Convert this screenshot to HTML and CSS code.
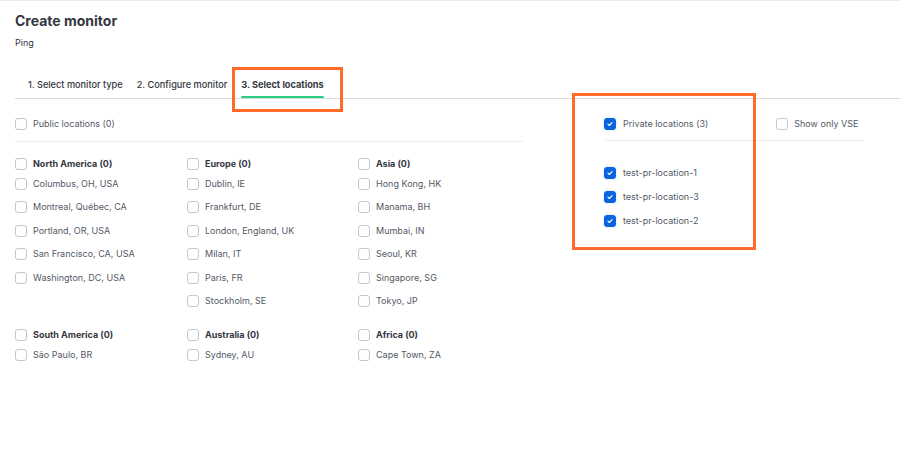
FILE: index.html
```html
<!DOCTYPE html>
<html>
<head>
<meta charset="utf-8">
<link rel="stylesheet" href="styles.css">
</head>
<body>
<div class="page">
  <h1 class="title">Create monitor</h1>
  <div class="subtitle">Ping</div>
  <div class="tabs">
    <div class="tab">1. Select monitor type</div>
    <div class="tab">2. Configure monitor</div>
    <div class="tab active">3. Select locations</div>
  </div>
  <div class="content">
    <div class="public">
      <label class="row top"><span class="cb"></span><span>Public locations (0)</span></label>
      <div class="divider"></div>
      <div class="grid">
        <div class="group">
          <label class="row head"><span class="cb"></span><span>North America (0)</span></label>
          <label class="row"><span class="cb"></span><span>Columbus, OH, USA</span></label>
          <label class="row"><span class="cb"></span><span>Montreal, Québec, CA</span></label>
          <label class="row"><span class="cb"></span><span>Portland, OR, USA</span></label>
          <label class="row"><span class="cb"></span><span>San Francisco, CA, USA</span></label>
          <label class="row"><span class="cb"></span><span>Washington, DC, USA</span></label>
        </div>
        <div class="group">
          <label class="row head"><span class="cb"></span><span>Europe (0)</span></label>
          <label class="row"><span class="cb"></span><span>Dublin, IE</span></label>
          <label class="row"><span class="cb"></span><span>Frankfurt, DE</span></label>
          <label class="row"><span class="cb"></span><span>London, England, UK</span></label>
          <label class="row"><span class="cb"></span><span>Milan, IT</span></label>
          <label class="row"><span class="cb"></span><span>Paris, FR</span></label>
          <label class="row"><span class="cb"></span><span>Stockholm, SE</span></label>
        </div>
        <div class="group">
          <label class="row head"><span class="cb"></span><span>Asia (0)</span></label>
          <label class="row"><span class="cb"></span><span>Hong Kong, HK</span></label>
          <label class="row"><span class="cb"></span><span>Manama, BH</span></label>
          <label class="row"><span class="cb"></span><span>Mumbai, IN</span></label>
          <label class="row"><span class="cb"></span><span>Seoul, KR</span></label>
          <label class="row"><span class="cb"></span><span>Singapore, SG</span></label>
          <label class="row"><span class="cb"></span><span>Tokyo, JP</span></label>
        </div>
        <div class="group">
          <label class="row head"><span class="cb"></span><span>South America (0)</span></label>
          <label class="row"><span class="cb"></span><span>São Paulo, BR</span></label>
        </div>
        <div class="group">
          <label class="row head"><span class="cb"></span><span>Australia (0)</span></label>
          <label class="row"><span class="cb"></span><span>Sydney, AU</span></label>
        </div>
        <div class="group">
          <label class="row head"><span class="cb"></span><span>Africa (0)</span></label>
          <label class="row"><span class="cb"></span><span>Cape Town, ZA</span></label>
        </div>
      </div>
    </div>
    <div class="private">
      <div class="private-top">
        <label class="row top wide"><span class="cb on"><svg viewBox="0 0 12 12"><path d="M3.5 6.2 L5.2 7.8 L8.5 4.4" /></svg></span><span>Private locations (3)</span></label>
        <label class="row top"><span class="cb"></span><span>Show only VSE</span></label>
      </div>
      <div class="divider"></div>
      <div class="private-list">
        <label class="row wide"><span class="cb on"><svg viewBox="0 0 12 12"><path d="M3.5 6.2 L5.2 7.8 L8.5 4.4" /></svg></span><span>test-pr-location-1</span></label>
        <label class="row wide"><span class="cb on"><svg viewBox="0 0 12 12"><path d="M3.5 6.2 L5.2 7.8 L8.5 4.4" /></svg></span><span>test-pr-location-3</span></label>
        <label class="row wide"><span class="cb on"><svg viewBox="0 0 12 12"><path d="M3.5 6.2 L5.2 7.8 L8.5 4.4" /></svg></span><span>test-pr-location-2</span></label>
      </div>
    </div>
  </div>
  <div class="hl hl-tab"></div>
  <div class="hl hl-private"></div>
</div>
</body>
</html>
```

FILE: styles.css
```css
* { box-sizing: border-box; }
html, body { margin: 0; padding: 0; background: #fff; }
body {
  font-family: Inter, "Noto Sans", sans-serif;
  color: #535966;
  border-top: 1px solid #ececec;
  width: 900px;
  height: 449px;
  overflow: hidden;
}
.page {
  position: relative;
  padding: 11px 0 0 15px;
}
.title {
  margin: 0;
  font-size: 14px;
  line-height: 18px;
  font-weight: 700;
  color: #343741;
}
.subtitle {
  margin-top: 7px;
  font-size: 9px;
  line-height: 12px;
  color: #343741;
}
.tabs {
  margin-top: 22px;
  display: flex;
  gap: 14px;
  padding-left: 13px;
  border-bottom: 1px solid #d3dae6;
  height: 28px;
}
.tab {
  font-size: 9.2px;
  font-weight: 500;
  color: #343741;
  line-height: 27px;
  position: relative;
}
.tab.active { font-weight: 700; }
.tab.active::after {
  content: "";
  position: absolute;
  left: 0; right: 0; bottom: 0;
  height: 2px;
  background: #2ad07e;
  border-radius: 1px;
}
.content {
  display: flex;
  padding-top: 19px;
}
.public { width: 508px; }
.divider {
  height: 1px;
  background: #eceef2;
}
.row {
  display: flex;
  align-items: center;
  gap: 6px;
  font-size: 9px;
  line-height: 12px;
  color: #535966;
  height: 12px;
}
.row.wide { gap: 7px; }
.row.top { margin-bottom: 11px; }
.public .divider { margin-bottom: 16px; }
.cb {
  width: 12px;
  height: 12px;
  border: 1px solid #c3c7cf;
  border-radius: 3px;
  background: #fff;
  flex: none;
  display: flex;
}
.cb.on {
  background: #0b64dd;
  border-color: #0b64dd;
  box-shadow: 0 0 2px rgba(11,100,221,0.35);
}
.cb svg { width: 10px; height: 10px; }
.cb path { fill: none; stroke: #fff; stroke-width: 1.3; stroke-linecap: round; stroke-linejoin: round; }
.grid {
  display: grid;
  grid-template-columns: 172px 171px 171px;
  row-gap: 22px;
}
.group { display: flex; flex-direction: column; gap: 11.5px; }
.group .row.head { font-weight: 700; color: #343741; margin-bottom: -4px; }
.private {
  margin-left: 81px;
  width: 260px;
}
.private-top { display: flex; gap: 68px; }
.private .row.top { margin-bottom: 10px; }
.private .divider { margin-bottom: 26px; }
.private-list { display: flex; flex-direction: column; gap: 12px; }
.hl {
  position: absolute;
  border: 3px solid #ff6a2b;
}
.hl-tab { left: 232px; top: 66px; width: 111px; height: 45px; }
.hl-private { left: 572px; top: 92px; width: 184px; height: 157px; }
```
